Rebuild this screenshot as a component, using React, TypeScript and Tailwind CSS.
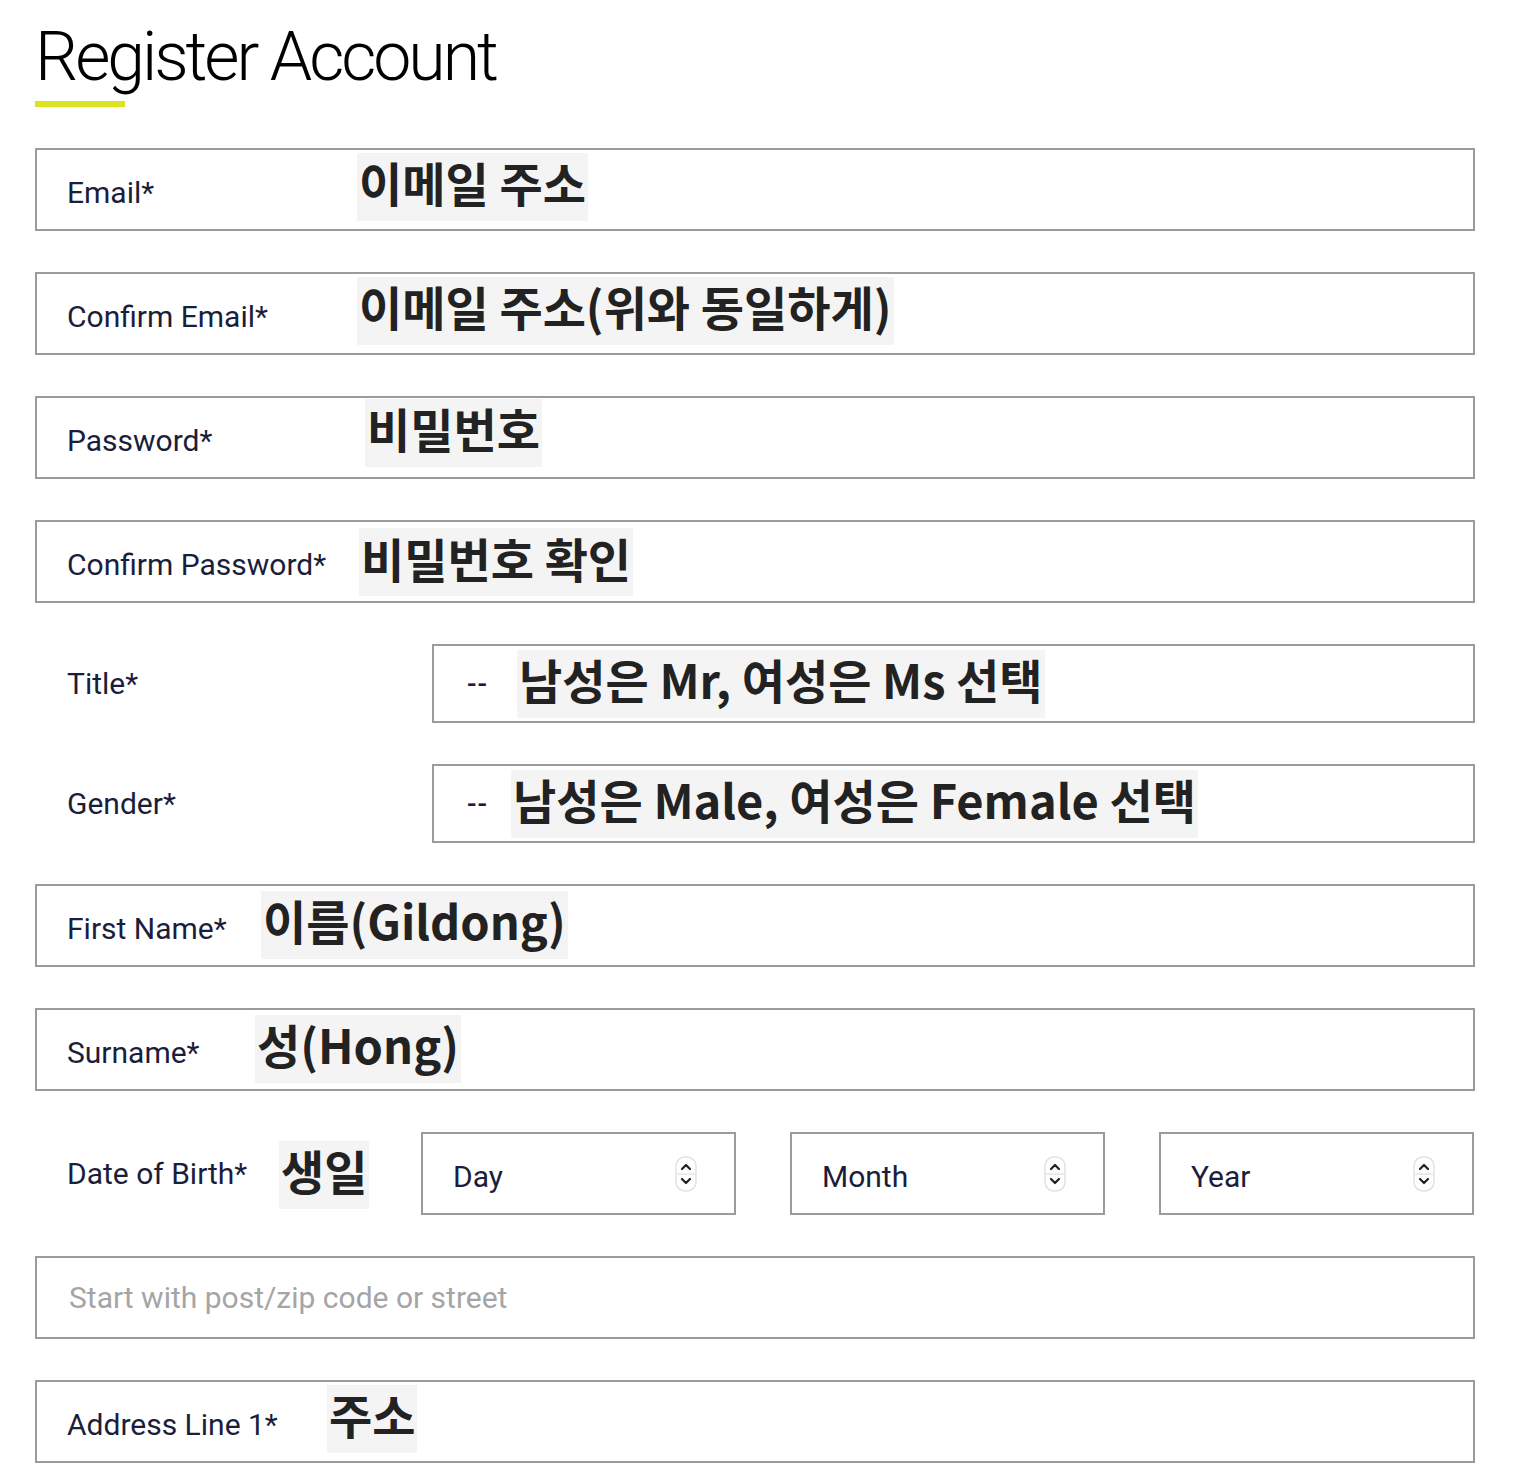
import React from "react";

const labelFont = { fontFamily: "Roboto, 'Liberation Sans', sans-serif" };

function Note({ children, className = "" }: { children: React.ReactNode; className?: string }) {
  return (
    <span
      className={`flex h-[68px] shrink-0 items-center whitespace-nowrap bg-[#f4f4f4] px-[2px] pb-[10px] text-[47px] font-bold leading-none text-[#222] ${className}`}
      style={{ fontFamily: "'Noto Sans CJK KR', 'Noto Sans', sans-serif" }}
    >
      {children}
    </span>
  );
}

function Spinner() {
  return (
    <svg width="22" height="36" viewBox="0 0 22 36" className="shrink-0">
      <rect x="1" y="1" width="20" height="34" rx="9" fill="#fff" stroke="#e2e2e2" strokeWidth="1.5" />
      <line x1="2" y1="18" x2="20" y2="18" stroke="#e6e6e6" strokeWidth="1.5" />
      <path d="M7 13 L11 9 L15 13" fill="none" stroke="#222" strokeWidth="2.2" strokeLinecap="round" strokeLinejoin="round" />
      <path d="M7 23 L11 27 L15 23" fill="none" stroke="#222" strokeWidth="2.2" strokeLinecap="round" strokeLinejoin="round" />
    </svg>
  );
}

function DateSelect({ label }: { label: string }) {
  return (
    <div className="flex h-[83px] w-[315px] items-center justify-between border-2 border-[#9b9b9b] pl-[30px] pr-[37px]">
      <span className="pt-[6px] text-[30px] text-[#1b1e3a]">{label}</span>
      <Spinner />
    </div>
  );
}

export default function App() {
  return (
    <div className="min-h-screen bg-white pl-[35px] pt-[23px]" style={labelFont}>
      {/* Heading */}
      <h1 className="h-[68px] text-[68px] font-light leading-[68px] tracking-[-0.045em] text-black">Register Account</h1>
      <div className="mt-[10px] h-[6px] w-[90px] bg-[#dce31c]" />

      <div className="mt-[41px] flex w-[1440px] flex-col gap-[41px]">
        <div className="flex h-[83px] items-center border-2 border-[#9b9b9b] pl-[30px]">
          <span className="w-[290px] shrink-0 pt-[6px] text-[30px] text-[#1b1e3a]">Email*</span>
          <Note className="-mt-[6px]">이메일 주소</Note>
        </div>

        <div className="flex h-[83px] items-center border-2 border-[#9b9b9b] pl-[30px]">
          <span className="w-[290px] shrink-0 pt-[6px] text-[30px] text-[#1b1e3a]">Confirm Email*</span>
          <Note className="-mt-[6px]">이메일 주소(위와 동일하게)</Note>
        </div>

        <div className="flex h-[83px] items-center border-2 border-[#9b9b9b] pl-[30px]">
          <span className="w-[298px] shrink-0 pt-[6px] text-[30px] text-[#1b1e3a]">Password*</span>
          <Note className="-mt-[10px]">비밀번호</Note>
        </div>

        <div className="flex h-[83px] items-center border-2 border-[#9b9b9b] pl-[30px]">
          <span className="w-[292px] shrink-0 pt-[6px] text-[30px] text-[#1b1e3a]">Confirm Password*</span>
          <Note className="mt-[1px]">비밀번호 확인</Note>
        </div>

        <div className="flex h-[79px] items-center">
          <span className="w-[397px] shrink-0 pl-[32px] text-[30px] text-[#1b1e3a]">Title*</span>
          <div className="flex h-[79px] flex-1 items-center border-2 border-[#9b9b9b] pl-[33px]">
            <span className="w-[50px] shrink-0 text-[28px] font-medium tracking-[1px] text-[#1b1e3a]">--</span>
            <Note>남성은 Mr, 여성은 Ms 선택</Note>
          </div>
        </div>

        <div className="flex h-[79px] items-center">
          <span className="w-[397px] shrink-0 pl-[32px] text-[30px] text-[#1b1e3a]">Gender*</span>
          <div className="flex h-[79px] flex-1 items-center border-2 border-[#9b9b9b] pl-[33px]">
            <span className="w-[44px] shrink-0 text-[28px] font-medium tracking-[1px] text-[#1b1e3a]">--</span>
            <Note>남성은 Male, 여성은 Female 선택</Note>
          </div>
        </div>

        <div className="flex h-[83px] items-center border-2 border-[#9b9b9b] pl-[30px]">
          <span className="w-[194px] shrink-0 pt-[6px] text-[30px] text-[#1b1e3a]">First Name*</span>
          <Note className="-mt-[2px]">이름(Gildong)</Note>
        </div>

        <div className="flex h-[83px] items-center border-2 border-[#9b9b9b] pl-[30px]">
          <span className="w-[188px] shrink-0 pt-[6px] text-[30px] text-[#1b1e3a]">Surname*</span>
          <Note className="-mt-[2px]">성(Hong)</Note>
        </div>

        <div className="flex h-[83px] items-center">
          <div className="flex w-[386px] shrink-0 items-center pl-[32px]">
            <span className="w-[212px] shrink-0 text-[30px] text-[#1b1e3a]">Date of Birth*</span>
            <Note className="mt-[2px]">생일</Note>
          </div>
          <div className="flex gap-[54px]">
            <DateSelect label="Day" />
            <DateSelect label="Month" />
            <DateSelect label="Year" />
          </div>
        </div>

        <div className="flex h-[83px] items-center border-2 border-[#9b9b9b] pl-[32px]">
          <span className="text-[30px] text-[#a5a5a5]">Start with post/zip code or street</span>
        </div>

        <div className="flex h-[83px] items-center border-2 border-[#9b9b9b] pl-[30px]">
          <span className="w-[260px] shrink-0 pt-[6px] text-[30px] text-[#1b1e3a]">Address Line 1*</span>
          <Note className="-mt-[6px]">주소</Note>
        </div>
      </div>
    </div>
  );
}
